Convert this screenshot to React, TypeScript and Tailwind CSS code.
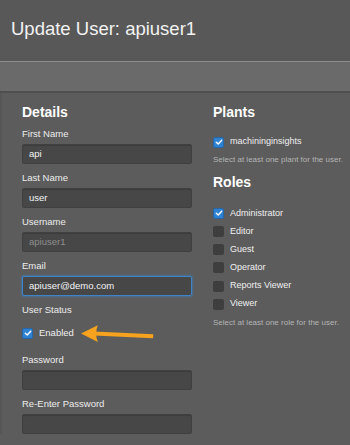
import React from "react";

type FieldProps = {
  label: string;
  value?: string;
  disabled?: boolean;
  focused?: boolean;
};

function Field({ label, value = "", disabled, focused }: FieldProps) {
  return (
    <div className="flex flex-col">
      <label className="mb-[4px] text-[9.5px] leading-[12px] text-[#ececec]">{label}</label>
      <div
        className={[
          "flex h-[20px] items-center rounded-[2px] px-[6px] text-[9.5px]",
          focused
            ? "border border-[#3d84c9] bg-[#474747] shadow-[0_0_2px_1px_rgba(61,132,201,0.45)]"
            : "border border-[#404040] bg-[#474747] shadow-[inset_0_1px_1px_rgba(0,0,0,0.15)]",
          disabled ? "text-[#8e8e8e]" : "text-[#f4f4f4]"
        ].join(" ")}
      >
        {value}
      </div>
    </div>
  );
}

function Checkbox({ checked }: { checked?: boolean }) {
  return (
    <span
      className={[
        "grid h-[11px] w-[11px] shrink-0 place-items-center rounded-[2px]",
        checked ? "border border-[#2466a8] bg-[#2f82d2]" : "bg-[#3e3e3e]"
      ].join(" ")}
    >
      {checked ? (
        <svg width="8" height="8" viewBox="0 0 8 8" fill="none">
          <path d="M1.3 4.2 L3.2 5.9 L6.7 2.2" stroke="white" strokeWidth="1.4" strokeLinecap="round" strokeLinejoin="round" />
        </svg>
      ) : null}
    </span>
  );
}

function CheckRow({ label, checked }: { label: string; checked?: boolean }) {
  return (
    <div className="flex h-[18.2px] items-center gap-[6px]">
      <Checkbox checked={checked} />
      <span className="text-[9px] text-[#f0f0f0]">{label}</span>
    </div>
  );
}

const roles = [
  { name: "Administrator", checked: true },
  { name: "Editor" },
  { name: "Guest" },
  { name: "Operator" },
  { name: "Reports Viewer" },
  { name: "Viewer" }
];

export default function App() {
  return (
    <div className="relative h-[445px] w-[350px] overflow-hidden bg-[#5c5c5c] font-['Liberation_Sans',Arial,sans-serif]">
      <div className="h-[61px] bg-[#585858] pl-[11px] pt-[18px]">
        <h1 className="text-[18.5px] leading-[22px] text-[#f2f2f2]">Update User: apiuser1</h1>
      </div>
      <div className="h-px bg-[#8e8e8e]" />
      <div className="h-[29px] bg-[#6a6a6a]" />
      <div className="h-[2px] bg-[#4f4f4f]" />

      <div className="flex border-l-[2px] border-[#565656] pl-[20px] pt-[11px]">
        <div className="w-[170px]">
          <h2 className="text-[14px] font-bold leading-[16px] text-white">Details</h2>
          <div className="mt-[8px] flex flex-col gap-[8px]">
            <Field label="First Name" value="api" />
            <Field label="Last Name" value="user" />
            <Field label="Username" value="apiuser1" disabled />
            <Field label="Email" value="apiuser@demo.com" focused />
            <div className="flex flex-col">
              <label className="mb-[4px] text-[9.5px] leading-[12px] text-[#ececec]">User Status</label>
              <div className="flex h-[26px] items-center gap-[6px]">
                <Checkbox checked />
                <span className="text-[9.5px] text-[#f0f0f0]">Enabled</span>
              </div>
            </div>
            <Field label="Password" />
            <Field label="Re-Enter Password" />
          </div>
        </div>

        <div className="ml-[21px] flex-1">
          <h2 className="text-[14px] font-bold leading-[16px] text-white">Plants</h2>
          <div className="mt-[13px]">
            <CheckRow label="machininginsights" checked />
          </div>
          <p className="mt-[4px] text-[8px] leading-[10px] text-[#b4b4b4]">Select at least one plant for the user.</p>

          <h2 className="mt-[9px] text-[14px] font-bold leading-[16px] text-white">Roles</h2>
          <div className="mt-[14px] flex flex-col">
            {roles.map((role) => (
              <CheckRow key={role.name} label={role.name} checked={role.checked} />
            ))}
          </div>
          <p className="mt-[4.5px] text-[8px] leading-[10px] text-[#b4b4b4]">Select at least one role for the user.</p>
        </div>
      </div>

      {/* annotation arrow */}
      <svg className="absolute left-[78px] top-[322px]" width="80" height="24" viewBox="78 322 80 24">
        <path d="M94 331.6 L153.3 334.2 L153.1 338.2 L94 335.4 Z" fill="#f6a21e" />
        <path d="M81 333.5 L97.8 325.3 Q94.5 333.6 97.8 342 Z" fill="#f6a21e" />
      </svg>
    </div>
  );
}
